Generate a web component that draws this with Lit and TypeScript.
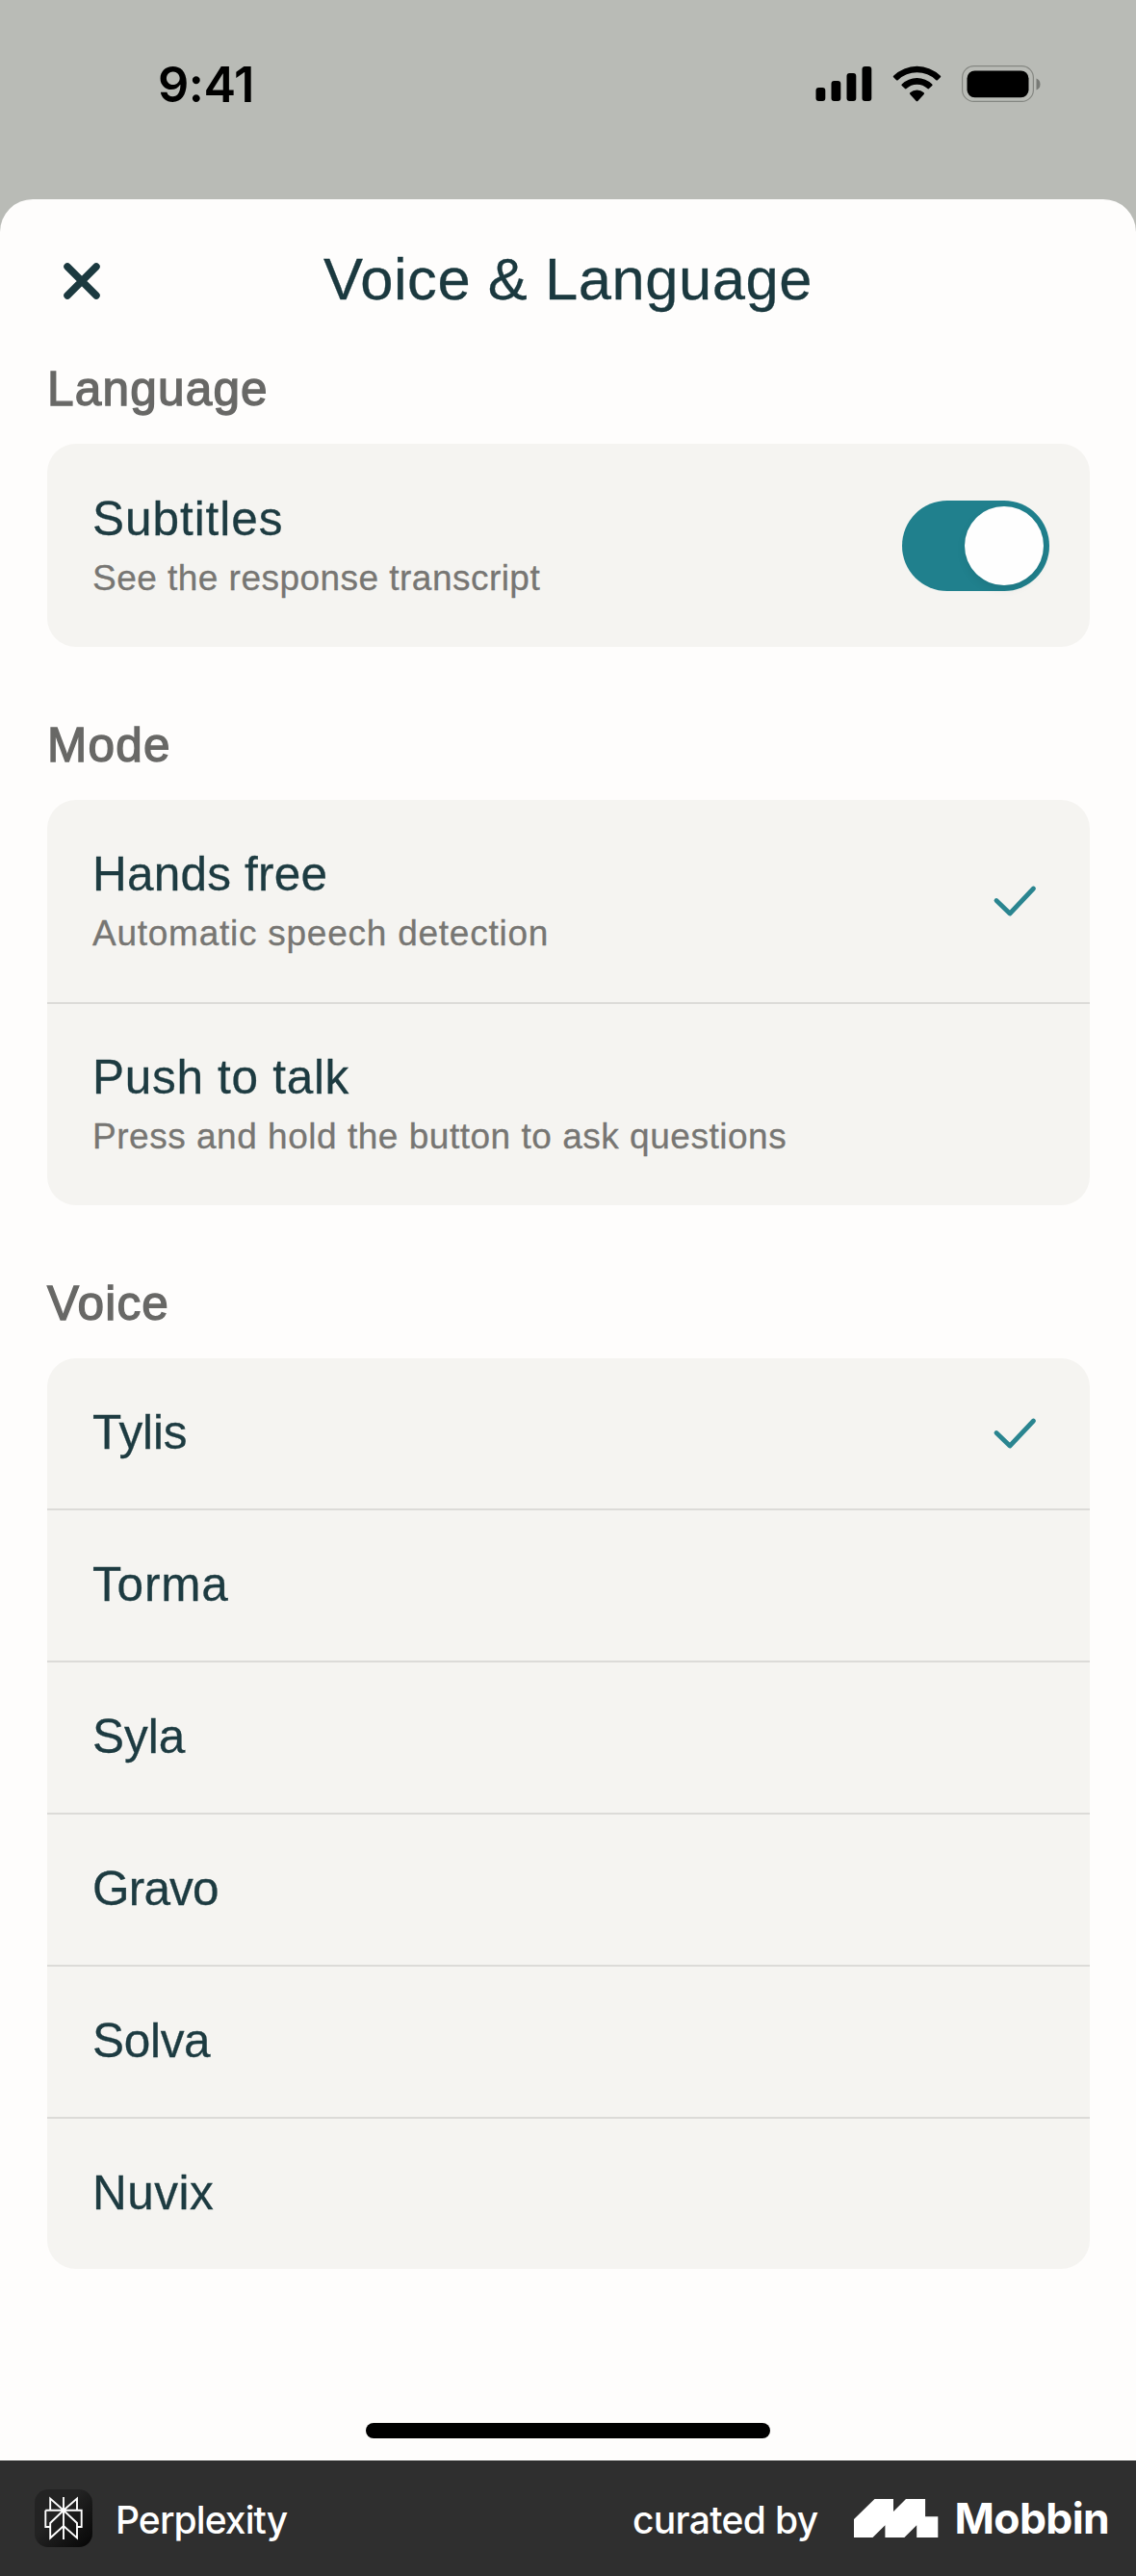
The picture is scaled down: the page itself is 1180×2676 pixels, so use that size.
import { LitElement, html, css, svg, nothing } from "lit";
import { customElement, property, state } from "lit/decorators.js";
import { classMap } from "lit/directives/class-map.js";
import { styleMap } from "lit/directives/style-map.js";

const checkIcon = html`<svg class="check" width="48" height="36" viewBox="0 0 48 36">
  <path d="M4 17.5L18 31L42.500 5" fill="none" stroke="#2a8590" stroke-width="4.800"
    stroke-linecap="round" stroke-linejoin="round"></path>
</svg>`;

@customElement("status-bar")
class StatusBar extends LitElement {
  static styles = css`
    :host {
      display: flex;
      justify-content: space-between;
      align-items: center;
      box-sizing: border-box;
      height: 174px;
      padding: 0 99px 0 164px;
      font-family: Inter, sans-serif;
    }
    .time {
      padding-top: 2px;
      font-size: 50.500px;
      line-height: 60px;
      font-weight: 600;
      letter-spacing: -0.500px;
      color: #000;
    }
    .icons {
      display: flex;
      align-items: center;
      gap: 21px;
    }
    svg {
      display: block;
    }
  `;
  render() {
    const bars = [22, 15, 7, 0];
    return html`
      <div class="time">9:41</div>
      <div class="icons">
        <svg width="59" height="38" viewBox="0 0 59 38">
          ${bars.map((y, i) => svg`<rect x=${i * 16 + 0.5} y=${y + 1} width="9.800" height=${36 - y} rx="3"></rect>`)}
        </svg>
        <svg width="51" height="38" viewBox="0 0 51 38">
          <path d="M1.100 10.700A35.200 35.200 0 0 1 49.900 10.700Q50.600 11.500 49.900 12.300L46.900 15.200Q46.100 15.900 45.300 15.200A28.800 28.800 0 0 0 5.700 15.200Q4.900 15.900 4.100 15.200L1.100 12.300Q.4 11.500 1.100 10.700Z"></path>
          <path d="M9.700 19.400A22.800 22.800 0 0 1 41.300 19.400Q42 20.200 41.300 21L38 24.100Q37.200 24.800 36.400 24.100A15.900 15.900 0 0 0 14.600 24.100Q13.800 24.800 13 24.100L9.700 21Q9 20.200 9.700 19.400Z"></path>
          <path d="M18.300 28.200A10.600 10.600 0 0 1 32.700 28.200Q33.500 29 32.700 29.900L26.300 36.900Q25.500 37.600 24.700 36.900L18.300 29.900Q17.500 29 18.300 28.200Z"></path>
        </svg>
        <svg width="82" height="38" viewBox="0 0 82 38">
          <rect x=".6" y=".6" width="73.800" height="36.800" rx="12" fill="none" stroke="#858782" stroke-width="1.200"></rect>
          <rect x="5.500" y="5.500" width="64" height="27.800" rx="8"></rect>
          <path d="M77.500 13.500Q81.500 15 81.500 19.500T77.500 25.500Z" fill="#787a76"></path>
        </svg>
      </div>
    `;
  }
}

@customElement("toggle-switch")
class ToggleSwitch extends LitElement {
  @property({ type: Boolean }) on = false;
  static styles = css`
    .track {
      display: flex;
      align-items: center;
      box-sizing: border-box;
      width: 153px;
      height: 94px;
      padding: 0 6px;
      border-radius: 47px;
      background: #cfcfca;
    }
    .on {
      justify-content: flex-end;
      background: #20808d;
    }
    .knob {
      width: 82px;
      height: 82px;
      border-radius: 50%;
      background: #fefefe;
      box-shadow: 0 4px 10px rgba(0, 0, 0, 0.08);
    }
  `;
  render() {
    return html`<div class=${classMap({ track: true, on: this.on })}><div class="knob"></div></div>`;
  }
}

interface Option {
  title: string;
  tracking: number;
  note?: string;
  noteTracking?: number;
  checked?: boolean;
  toggle?: boolean;
}

@customElement("settings-group")
class SettingsGroup extends LitElement {
  @property() label = "";
  @property({ attribute: false }) options: Option[] = [];
  static styles = css`
    :host {
      display: block;
    }
    .label {
      margin: 0 0 27px;
      font-size: 49.500px;
      line-height: 60px;
      font-weight: 400;
      letter-spacing: 1.200px;
      color: #686866;
      -webkit-text-stroke: 1.400px #686866;
    }
    .card {
      border-radius: 30px;
      background: #f5f4f1;
      overflow: hidden;
    }
    .row {
      display: flex;
      justify-content: space-between;
      align-items: center;
      box-sizing: border-box;
      height: 156px;
      padding: 0 53px 0 47px;
    }
    .row.tall {
      height: 209.500px;
    }
    .row.switch {
      height: 211px;
      padding-right: 42px;
    }
    .row + .row {
      border-top: 2px solid #dcdbd8;
      height: 158px;
    }
    .row.tall + .row.tall {
      height: 211.500px;
    }
    .text {
      display: flex;
      flex-direction: column;
      gap: 10px;
      padding-bottom: 2px;
    }
    .title {
      font-size: 49.500px;
      line-height: 60px;
      color: #1d3b41;
      -webkit-text-stroke: 0.300px #1d3b41;
    }
    .note {
      font-size: 37px;
      line-height: 44px;
      color: #777673;
      -webkit-text-stroke: 0.300px #777673;
    }
    .check {
      display: block;
    }
  `;
  render() {
    return html`
      <h2 class="label">${this.label}</h2>
      <div class="card">
        ${this.options.map(
          (o) => html`<div class=${classMap({ row: true, tall: !!o.note, switch: !!o.toggle })}>
            <div class="text">
              <div class="title" style=${styleMap({ letterSpacing: `${o.tracking}px` })}>${o.title}</div>
              ${o.note
                ? html`<div class="note" style=${styleMap({ letterSpacing: `${o.noteTracking ?? 0}px` })}>${o.note}</div>`
                : nothing}
            </div>
            ${o.toggle ? html`<toggle-switch on></toggle-switch>` : nothing}
            ${o.checked ? checkIcon : nothing}
          </div>`
        )}
      </div>
    `;
  }
}

@customElement("credit-bar")
class CreditBar extends LitElement {
  static styles = css`
    :host {
      display: flex;
      justify-content: space-between;
      align-items: center;
      box-sizing: border-box;
      height: 120px;
      padding: 0 28px 0 36px;
      background: #2f2f2f;
      color: #fff;
      font-family: Inter, sans-serif;
    }
    .side {
      display: flex;
      align-items: center;
    }
    .app {
      display: flex;
      width: 60px;
      height: 60px;
      margin-right: 24px;
      border-radius: 14px;
      background: linear-gradient(135deg, #232323 40%, #050505);
    }
    .name {
      padding-top: 3px;
      font-size: 39px;
      line-height: 48px;
      font-weight: 500;
      letter-spacing: -0.900px;
    }
    .by {
      letter-spacing: -0.650px;
    }
    .mark {
      margin: 0 17px 0 37px;
    }
    .brand {
      font-size: 44.500px;
      line-height: 52px;
      font-weight: 700;
      letter-spacing: -0.700px;
    }
  `;
  render() {
    return html`
      <div class="side">
        <div class="app">
          <svg width="60" height="60" viewBox="0 0 60 60" fill="none" stroke="#fff" stroke-width="1.900">
            <path d="M30 8V52M11.300 21.700H48.700V39H44M11.300 21.700V39H16M30 21.700L16.200 9.500V21.700M30 21.700L44 9.500V21.700M30 21.700L16.200 35V50.500L30 38L44 50.500V35Z"></path>
          </svg>
        </div>
        <div class="name">Perplexity</div>
      </div>
      <div class="side">
        <div class="name by">curated by</div>
        <svg class="mark" width="88" height="40" viewBox="0 0 88 40" fill="#fff">
          <path d="M0 21L21.500 0H41V13L54 0H74.100V18.200H87.300V40H65.200V27.200L52.400 40H32.400V27.200L19.500 40H0Z"></path>
        </svg>
        <div class="brand">Mobbin</div>
      </div>
    `;
  }
}

@customElement("app-root")
class AppRoot extends LitElement {
  @state() private groups: { label: string; options: Option[] }[] = [
    {
      label: "Language",
      options: [
        { title: "Subtitles", tracking: 0.95, note: "See the response transcript", noteTracking: 0.47, toggle: true },
      ],
    },
    {
      label: "Mode",
      options: [
        { title: "Hands free", tracking: 0.2, note: "Automatic speech detection", noteTracking: 0.75, checked: true },
        { title: "Push to talk", tracking: 0.7, note: "Press and hold the button to ask questions", noteTracking: 0.52 },
      ],
    },
    {
      label: "Voice",
      options: [
        { title: "Tylis", tracking: -0.1, checked: true },
        { title: "Torma", tracking: 0.8 },
        { title: "Syla", tracking: 0 },
        { title: "Gravo", tracking: -0.8 },
        { title: "Solva", tracking: -0.3 },
        { title: "Nuvix", tracking: 0.5 },
      ],
    },
  ];
  static styles = css`
    :host {
      display: flex;
      flex-direction: column;
      width: 1180px;
      height: 2676px;
      background: #b9bbb6;
      font-family: "Liberation Sans", Arial, sans-serif;
    }
    .sheet {
      flex: 1;
      display: flex;
      flex-direction: column;
      margin-top: 33px;
      border-radius: 34px 34px 0 0;
      background: #fefdfc;
    }
    .head {
      display: grid;
      grid-template-columns: 56px 1fr 56px;
      align-items: center;
      height: 72px;
      padding: 47px 57px 48px;
    }
    .close {
      display: block;
      margin-top: 4px;
    }
    .heading {
      margin: 0;
      font-size: 61.500px;
      line-height: 72px;
      font-weight: 400;
      letter-spacing: 0.550px;
      text-align: center;
      color: #1b393f;
      -webkit-text-stroke: 0.300px #1b393f;
    }
    .groups {
      display: flex;
      flex-direction: column;
      gap: 72px;
      padding: 0 48px 0 49px;
    }
    .home {
      width: 420px;
      height: 16px;
      margin: auto auto 23px;
      border-radius: 8px;
      background: #000;
    }
  `;
  render() {
    return html`
      <status-bar></status-bar>
      <main class="sheet">
        <header class="head">
          <svg class="close" width="56" height="56" viewBox="0 0 56 56">
            <path d="M13 13L43 43M43 13L13 43" stroke="#1b393f" stroke-width="7.500" stroke-linecap="round"></path>
          </svg>
          <h1 class="heading">Voice &amp; Language</h1>
        </header>
        <div class="groups">
          ${this.groups.map((g) => html`<settings-group .label=${g.label} .options=${g.options}></settings-group>`)}
        </div>
        <div class="home"></div>
      </main>
      <credit-bar></credit-bar>
    `;
  }
}
